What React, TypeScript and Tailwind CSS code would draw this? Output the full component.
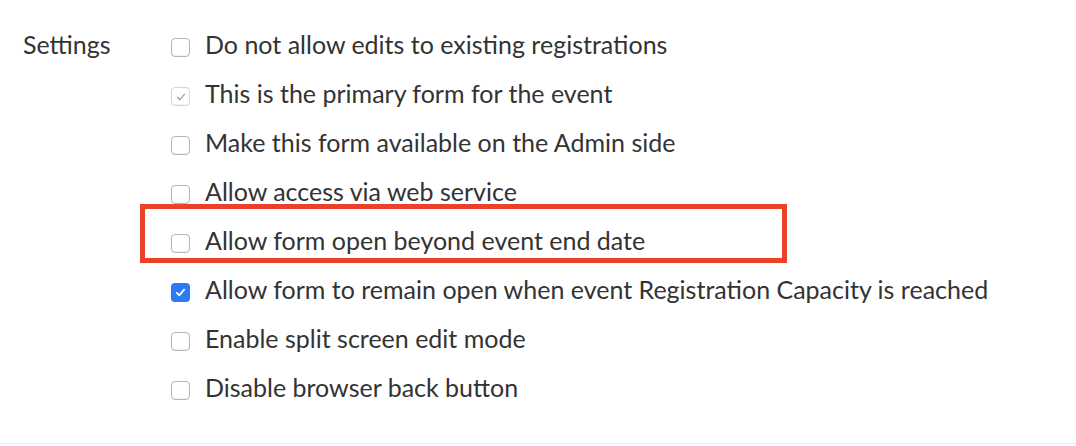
import React from 'react';

type Setting = { label: string; checked?: boolean; disabled?: boolean };

const settings: Setting[] = [
  { label: 'Do not allow edits to existing registrations' },
  { label: 'This is the primary form for the event', checked: true, disabled: true },
  { label: 'Make this form available on the Admin side' },
  { label: 'Allow access via web service' },
  { label: 'Allow form open beyond event end date' },
  { label: 'Allow form to remain open when event Registration Capacity is reached', checked: true },
  { label: 'Enable split screen edit mode' },
  { label: 'Disable browser back button' },
];

const Box = ({ checked, disabled }: { checked?: boolean; disabled?: boolean }) => {
  if (checked && !disabled) {
    return (
      <span className="flex h-[19px] w-[19px] shrink-0 items-center justify-center rounded-[4px] bg-[#2d7bf4]">
        <svg viewBox="0 0 16 16" className="h-[13px] w-[13px]">
          <path d="M3.5 8.5l3 3 6-7" fill="none" stroke="#fff" strokeWidth="2.2" strokeLinecap="round" strokeLinejoin="round" />
        </svg>
      </span>
    );
  }
  return (
    <span
      className={`flex h-[19px] w-[19px] shrink-0 items-center justify-center rounded-[4px] border bg-white ${
        disabled ? 'border-[#d6d6d6]' : 'border-[#b5b5b5]'
      } shadow-[inset_0_-1px_1px_rgba(0,0,0,0.06)]`}
    >
      {checked && (
        <svg viewBox="0 0 16 16" className="h-[12px] w-[12px]">
          <path d="M3.5 8.5l3 3 6-7" fill="none" stroke="#a8a8a8" strokeWidth="2" strokeLinecap="round" strokeLinejoin="round" />
        </svg>
      )}
    </span>
  );
};

export default function App() {
  return (
    <div className="relative h-[444px] w-full border-b border-[#ececec] bg-white font-['Lato','Noto_Sans',sans-serif] text-[25px] text-[#333]">
      <div className="flex pl-[23px] pt-[20px]">
        <div className="w-[148px] leading-[49px]">Settings</div>
        <div className="flex flex-col">
          {settings.map((s) => (
            <label key={s.label} className="flex h-[49px] items-center gap-[15px]">
              <span className="mt-[6px]">
                <Box checked={s.checked} disabled={s.disabled} />
              </span>
              <span>{s.label}</span>
            </label>
          ))}
        </div>
      </div>
      <div className="pointer-events-none absolute left-[140px] top-[204px] h-[59px] w-[647px] border-[5px] border-[#ea4129]" />
    </div>
  );
}
